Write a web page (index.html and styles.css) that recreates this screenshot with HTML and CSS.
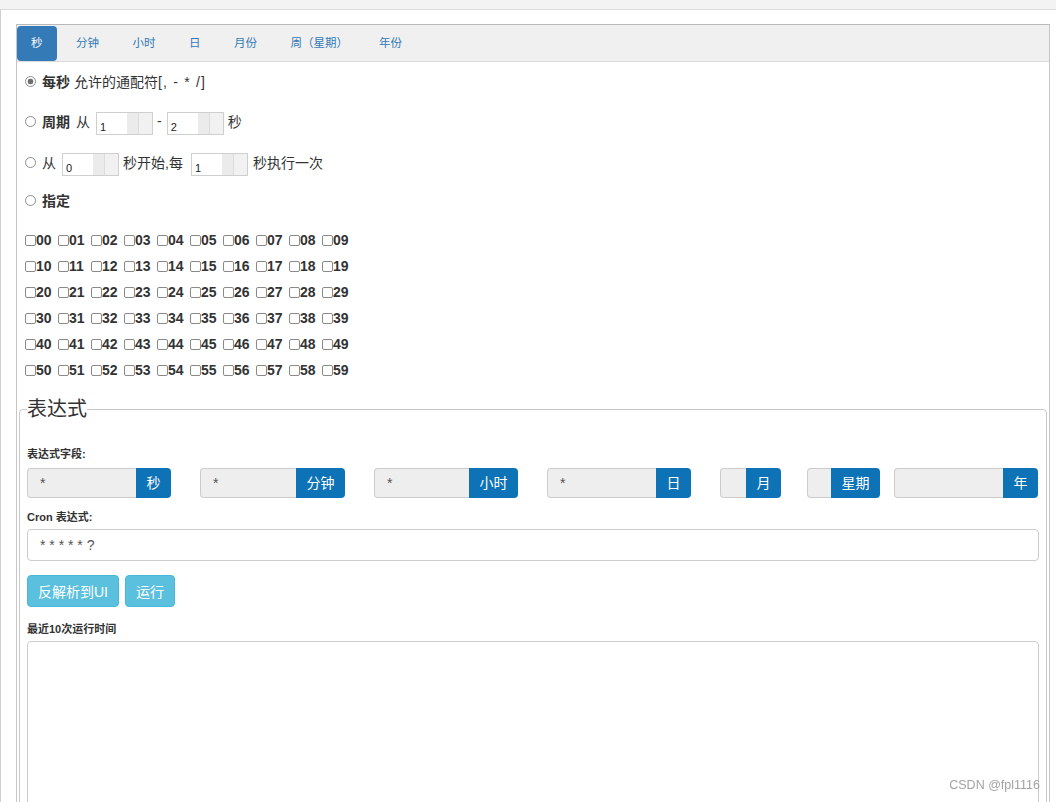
FILE: index.html
```html
<!DOCTYPE html>
<html lang="zh-CN">
<head>
  <meta charset="UTF-8" />
  <meta name="viewport" content="width=device-width, initial-scale=1.0" />
  <title>Cron 表达式生成器</title>
  <link rel="stylesheet" href="styles.css">
</head>
<body>
  <div class="topbar"></div>

  <div class="page">
    <div class="panel">
      <ul class="tabs">
        <li class="tab active">秒</li>
        <li class="tab">分钟</li>
        <li class="tab">小时</li>
        <li class="tab">日</li>
        <li class="tab">月份</li>
        <li class="tab tab-week">周（星期）</li>
        <li class="tab">年份</li>
      </ul>

      <div class="pane">
        <label class="opt opt-1">
          <input type="radio" name="second" class="radio" checked>
          <b>每秒</b><span class="t4">允许的通配符<span class="wild">[, - * /]</span></span>
        </label>

        <label class="opt opt-2">
          <input type="radio" name="second" class="radio">
          <b>周期</b><span class="t6">从</span>
          <span class="num n6">1</span><span class="t4">-</span>
          <span class="num n5">2</span><span class="t4">秒</span>
        </label>

        <label class="opt opt-3">
          <input type="radio" name="second" class="radio">
          <span>从</span>
          <span class="num n6">0</span><span class="t4">秒开始,每</span>
          <span class="num n8">1</span><span class="t5">秒执行一次</span>
        </label>

        <label class="opt opt-4">
          <input type="radio" name="second" class="radio">
          <b>指定</b>
        </label>

        <div class="checks">
          <label class="chk"><input type="checkbox">00</label><label class="chk"><input type="checkbox">01</label><label class="chk"><input type="checkbox">02</label><label class="chk"><input type="checkbox">03</label><label class="chk"><input type="checkbox">04</label><label class="chk"><input type="checkbox">05</label><label class="chk"><input type="checkbox">06</label><label class="chk"><input type="checkbox">07</label><label class="chk"><input type="checkbox">08</label><label class="chk"><input type="checkbox">09</label>
          <label class="chk"><input type="checkbox">10</label><label class="chk"><input type="checkbox">11</label><label class="chk"><input type="checkbox">12</label><label class="chk"><input type="checkbox">13</label><label class="chk"><input type="checkbox">14</label><label class="chk"><input type="checkbox">15</label><label class="chk"><input type="checkbox">16</label><label class="chk"><input type="checkbox">17</label><label class="chk"><input type="checkbox">18</label><label class="chk"><input type="checkbox">19</label>
          <label class="chk"><input type="checkbox">20</label><label class="chk"><input type="checkbox">21</label><label class="chk"><input type="checkbox">22</label><label class="chk"><input type="checkbox">23</label><label class="chk"><input type="checkbox">24</label><label class="chk"><input type="checkbox">25</label><label class="chk"><input type="checkbox">26</label><label class="chk"><input type="checkbox">27</label><label class="chk"><input type="checkbox">28</label><label class="chk"><input type="checkbox">29</label>
          <label class="chk"><input type="checkbox">30</label><label class="chk"><input type="checkbox">31</label><label class="chk"><input type="checkbox">32</label><label class="chk"><input type="checkbox">33</label><label class="chk"><input type="checkbox">34</label><label class="chk"><input type="checkbox">35</label><label class="chk"><input type="checkbox">36</label><label class="chk"><input type="checkbox">37</label><label class="chk"><input type="checkbox">38</label><label class="chk"><input type="checkbox">39</label>
          <label class="chk"><input type="checkbox">40</label><label class="chk"><input type="checkbox">41</label><label class="chk"><input type="checkbox">42</label><label class="chk"><input type="checkbox">43</label><label class="chk"><input type="checkbox">44</label><label class="chk"><input type="checkbox">45</label><label class="chk"><input type="checkbox">46</label><label class="chk"><input type="checkbox">47</label><label class="chk"><input type="checkbox">48</label><label class="chk"><input type="checkbox">49</label>
          <label class="chk"><input type="checkbox">50</label><label class="chk"><input type="checkbox">51</label><label class="chk"><input type="checkbox">52</label><label class="chk"><input type="checkbox">53</label><label class="chk"><input type="checkbox">54</label><label class="chk"><input type="checkbox">55</label><label class="chk"><input type="checkbox">56</label><label class="chk"><input type="checkbox">57</label><label class="chk"><input type="checkbox">58</label><label class="chk"><input type="checkbox">59</label>
        </div>

        <fieldset class="expr">
          <legend>表达式</legend>

          <div class="lbl lbl-first">表达式字段:</div>
          <div class="fields">
            <div class="group g-sec"><span class="field">*</span><span class="addon">秒</span></div>
            <div class="group g-min"><span class="field">*</span><span class="addon">分钟</span></div>
            <div class="group g-hour"><span class="field">*</span><span class="addon">小时</span></div>
            <div class="group g-day"><span class="field">*</span><span class="addon">日</span></div>
            <div class="group g-month"><span class="field"></span><span class="addon">月</span></div>
            <div class="group g-week"><span class="field"></span><span class="addon">星期</span></div>
            <div class="group g-year"><span class="field"></span><span class="addon">年</span></div>
          </div>

          <div class="lbl">Cron 表达式:</div>
          <div class="cron">* * * * * ?</div>

          <div class="actions">
            <button class="btn">反解析到UI</button>
            <button class="btn">运行</button>
          </div>

          <div class="lbl lbl-runs">最近10次运行时间</div>
          <div class="result"></div>
        </fieldset>
      </div>
    </div>
  </div>

  <div class="watermark">CSDN @fpl1116</div>
</body>
</html>
```

FILE: styles.css
```css
body {
  margin: 0;
  background: #fff;
  font-family: "Liberation Sans", Arial, "Noto Sans CJK SC", sans-serif;
  font-size: 14px;
  color: #333;
}

.topbar {
  height: 9px;
  background: #f3f3f3;
  border-bottom: 1px solid #dcdcdc;
}

.page {
  border-left: 1px solid #d0d0d0;
  padding: 14px 6px 0 15px;
}

.panel {
  border: 1px solid #c6c6c6;
  border-top-color: #b8b8b8;
  border-bottom: none;
}

/* tabs */
.tabs {
  display: flex;
  margin: 0;
  padding: 1px 0 0;
  list-style: none;
  height: 35px;
  background: #f0f0f0;
  border-bottom: 1px solid #dadada;
}

.tab {
  padding: 0 14px;
  margin-right: 5.5px;
  line-height: 35px;
  font-size: 11.5px;
  color: #337ab7;
}

.tab.active {
  background: #337ab7;
  color: #fff;
  border-radius: 4px;
}

.tab-week {
  margin-right: 3px;
}

.pane {
  padding: 0 2px;
}

/* radio rows */
.opt {
  display: flex;
  align-items: center;
  margin-left: 6px;
}

.opt-1 { height: 38px; }
.opt-2 { height: 42px; }
.opt-3 { height: 40px; }
.opt-4 { height: 36px; }

.radio {
  appearance: none;
  box-sizing: border-box;
  width: 11px;
  height: 11px;
  margin: 0 6px 0 0;
  border: 1px solid #8d8d8d;
  border-radius: 50%;
  background: #fff;
}

.radio:checked {
  background: radial-gradient(circle, #6f6f6f 0 2.6px, #fff 3.2px);
}

.wild {
  letter-spacing: 1.2px;
}

.t4 { margin-left: 4px; }
.t5 { margin-left: 5px; }
.t6 { margin-left: 6px; }

.num {
  display: flex;
  align-items: flex-end;
  box-sizing: border-box;
  width: 57px;
  height: 23px;
  margin-top: 5px;
  padding-left: 3px;
  border: 1px solid #cfcfcf;
  background: linear-gradient(to right, #fff 0 30px, #ebebeb 30px 41px, #dcdcdc 41px 42px, #f1f1f1 42px);
  font-size: 11px;
  line-height: 13px;
  color: #222;
}

.n5 { margin-left: 5px; }
.n6 { margin-left: 6px; }
.n8 { margin-left: 8px; }

/* second checkboxes */
.checks {
  display: grid;
  grid-template-columns: repeat(10, 33px);
  grid-auto-rows: 26px;
  margin: 9px 0 0 6px;
}

.chk {
  display: flex;
  align-items: center;
  font-weight: bold;
}

.chk input {
  appearance: none;
  box-sizing: border-box;
  width: 11px;
  height: 11px;
  margin: 0;
  border: 1px solid #8a8a8a;
  border-radius: 2px;
  background: #fff;
}

/* expression box */
.expr {
  margin: 15px 0 0;
  padding: 0 7px 40px;
  min-width: 0;
  border: 1px solid #c8c8c8;
  border-radius: 4px;
}

.expr legend {
  padding: 0;
  font-size: 20px;
  line-height: 22px;
  color: #333;
}

.lbl {
  margin-top: 11px;
  font-size: 11px;
  font-weight: bold;
  line-height: 16px;
}

.lbl-first {
  margin-top: 26px;
}

.lbl-runs {
  margin-top: 14px;
}

.fields {
  display: flex;
  margin-top: 6px;
  height: 30px;
}

.group {
  display: flex;
  flex-shrink: 0;
  margin-right: 29px;
}

.g-sec, .g-hour, .g-day, .g-year { width: 144px; }
.g-min { width: 145px; }
.g-month { width: 61px; margin-right: 26px; }
.g-week { width: 73px; margin-right: 14px; }
.g-year { margin-right: 0; }

.field {
  flex: 1;
  padding-left: 12px;
  background: #eee;
  border: 1px solid #ccc;
  border-right: none;
  border-radius: 4px 0 0 4px;
  line-height: 28px;
  color: #555;
}

.addon {
  padding: 0 10.5px;
  background: #0e72b6;
  border-radius: 0 4px 4px 0;
  color: #fff;
  line-height: 30px;
}

.cron {
  box-sizing: border-box;
  height: 32px;
  margin-top: 4px;
  padding-left: 12px;
  border: 1px solid #ccc;
  border-radius: 4px;
  line-height: 30px;
  color: #555;
}

.actions {
  display: flex;
  gap: 6px;
  margin-top: 14px;
}

.btn {
  height: 32px;
  padding: 0 10px;
  background: #5bc0de;
  border: 1px solid #46b8da;
  border-radius: 4px;
  color: #fff;
  font: inherit;
}

.result {
  height: 200px;
  margin-top: 4px;
  border: 1px solid #ccc;
  border-radius: 4px;
}

.watermark {
  position: fixed;
  right: 16px;
  bottom: 10px;
  font-size: 12.5px;
  color: #a3a3a3;
}
```
